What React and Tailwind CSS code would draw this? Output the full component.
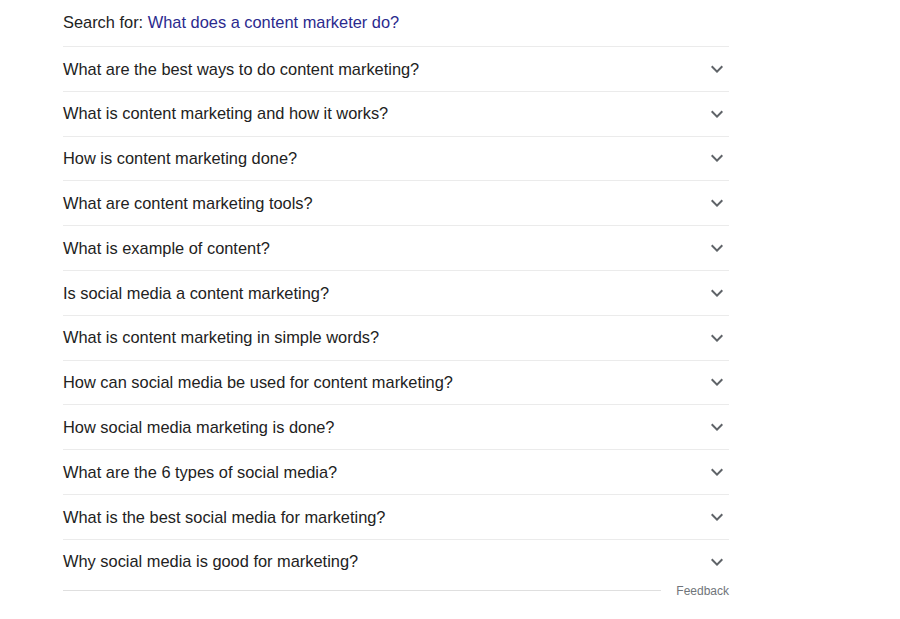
const QUESTIONS = [
  'What are the best ways to do content marketing?',
  'What is content marketing and how it works?',
  'How is content marketing done?',
  'What are content marketing tools?',
  'What is example of content?',
  'Is social media a content marketing?',
  'What is content marketing in simple words?',
  'How can social media be used for content marketing?',
  'How social media marketing is done?',
  'What are the 6 types of social media?',
  'What is the best social media for marketing?',
  'Why social media is good for marketing?',
];

function Chevron() {
  return (
    <svg className="w-6 h-6 flex-shrink-0" viewBox="0 0 24 24" fill="#5f6368">
      <path d="M16.59 8.59L12 13.17 7.41 8.59 6 10l6 6 6-6z" />
    </svg>
  );
}

export default function App() {
  return (
    <div className="w-[900px] h-[619px] bg-white font-['Liberation_Sans',Arial,sans-serif]">
      <div className="ml-[63px] w-[666px]">
        {/* Search for */}
        <div className="h-[47px] pb-[2px] flex items-center border-b border-[#ebebeb] text-[16.4px] text-[#222]">
          <span>Search for:&nbsp;</span>
          <a className="text-[#2b2a8e]">What does a content marketer do?</a>
        </div>

        {/* Questions */}
        {QUESTIONS.map((q, i) => (
          <div
            key={q}
            className={
              i === QUESTIONS.length - 1
                ? 'h-[44px] flex items-center justify-between text-[16.4px] text-[#222]'
                : 'h-[44.8px] flex items-center justify-between border-b border-[#ebebeb] text-[16.4px] text-[#222]'
            }
          >
            <span>{q}</span>
            <Chevron />
          </div>
        ))}

        {/* Feedback */}
        <div className="h-[14px] flex items-center">
          <div className="flex-1 h-px bg-[#dfdfdf] mr-[15px]" />
          <span className="text-[12px] leading-[14px] text-[#70757a]">Feedback</span>
        </div>
      </div>
    </div>
  );
}
